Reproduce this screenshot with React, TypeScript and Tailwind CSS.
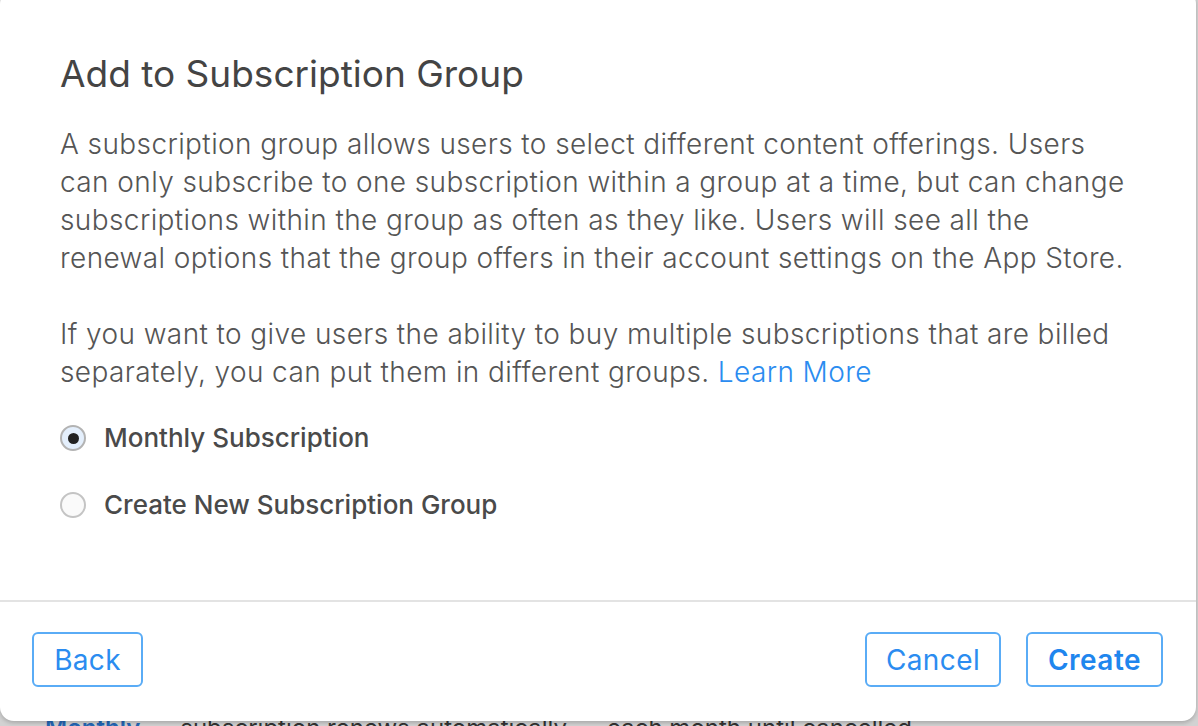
import { useState } from "react";

const Radio = ({ checked, label, onClick }: { checked: boolean; label: string; onClick: () => void }) => {
  return (
    <label className="flex items-center gap-[18px] cursor-pointer" onClick={onClick}>
      <span
        className={
          checked
            ? "w-[26px] h-[26px] rounded-full border-2 border-[#b3b3b3] bg-[#e4effc] flex items-center justify-center"
            : "w-[26px] h-[26px] rounded-full border-2 border-[#c4c4c4] bg-[#fafafa] flex items-center justify-center"
        }
      >
        {checked && <span className="w-[11px] h-[11px] rounded-full bg-[#222]" />}
      </span>
      <span className="text-[26px] font-medium text-[#4a4a4a] leading-none">{label}</span>
    </label>
  );
};

const App = () => {
  const [choice, setChoice] = useState<string>("monthly");

  return (
    <div
      className="w-[1198px] h-[726px] bg-[#d2d2d2] overflow-hidden"
      style={{ fontFamily: "Inter, 'Noto Sans', sans-serif" }}
    >
      <div className="-mt-[10px] w-[1196px] h-[731px] bg-white rounded-[14px] shadow-[0_2px_4px_rgba(0,0,0,0.2)] flex flex-col relative z-10">
        <div className="flex-1 pl-[60px] pr-[40px] pt-[62px]">
          <h2 className="text-[37px] text-[#444] leading-[44px]">Add to Subscription Group</h2>
          <div className="mt-[29px] text-[28px] tracking-[0.4px] text-[#555] leading-[38px] font-light">
            <p>
              A subscription group allows users to select different content offerings. Users
              <br />
              can only subscribe to one subscription within a group at a time, but can change
              <br />
              subscriptions within the group as often as they like. Users will see all the
              <br />
              renewal options that the group offers in their account settings on the App Store.
            </p>
            <p className="mt-[38px]">
              If you want to give users the ability to buy multiple subscriptions that are billed
              <br />
              separately, you can put them in different groups. <a className="text-[#2b8cf0] cursor-pointer">Learn More</a>
            </p>
          </div>
          <div className="mt-[34px] flex flex-col gap-[41px]">
            <Radio checked={choice === "monthly"} label="Monthly Subscription" onClick={() => setChoice("monthly")} />
            <Radio
              checked={choice === "new"}
              label="Create New Subscription Group"
              onClick={() => setChoice("new")}
            />
          </div>
        </div>
        <div className="h-[121px] border-t-2 border-[#e3e3e3] flex items-start justify-between pt-[30px] pl-[32px] pr-[33px]">
          <button className="w-[111px] h-[55px] rounded-[6px] border-2 border-[#5aacf6] text-[28px] tracking-[0.3px] text-[#2b8cf0]">
            Back
          </button>
          <div className="flex gap-[25px]">
            <button className="w-[136px] h-[55px] rounded-[6px] border-2 border-[#5aacf6] text-[28px] tracking-[0.4px] text-[#2b8cf0]">
              Cancel
            </button>
            <button className="w-[137px] h-[55px] rounded-[6px] border-2 border-[#5aacf6] text-[28px] tracking-[0.5px] font-semibold text-[#1f86ee]">
              Create
            </button>
          </div>
        </div>
      </div>
      <div className="flex gap-[40px] px-[45px] -mt-[8px] text-[24px] leading-[30px] text-[#333]">
        <span className="text-[#2466b5] font-semibold">Monthly</span>
        <span>subscription renews automatically</span>
        <span>each month until cancelled</span>
      </div>
    </div>
  );
};

export default App;
